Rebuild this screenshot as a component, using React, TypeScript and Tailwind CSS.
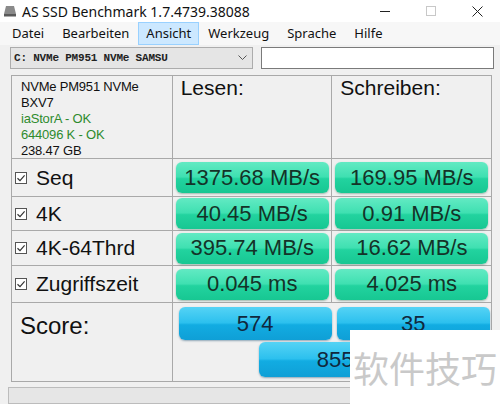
import React from "react";

const rows = [
  { label: "Seq", read: "1375.68 MB/s", write: "169.95 MB/s", h: "h-[38px]" },
  { label: "4K", read: "40.45 MB/s", write: "0.91 MB/s", h: "h-[34px]" },
  { label: "4K-64Thrd", read: "395.74 MB/s", write: "16.62 MB/s", h: "h-[35px]" },
  { label: "Zugriffszeit", read: "0.045 ms", write: "4.025 ms", h: "h-[37px]" },
];

const menu = ["Datei", "Bearbeiten", "Ansicht", "Werkzeug", "Sprache", "Hilfe"];

function CheckBox() {
  return (
    <svg width="12" height="12" viewBox="0 0 12 12" className="shrink-0">
      <rect x="0.5" y="0.5" width="11" height="11" fill="#fff" stroke="#555" />
      <path d="M2.5 6.2 L5 8.6 L9.6 3.4" fill="none" stroke="#333" strokeWidth="1.2" />
    </svg>
  );
}

function GreenBar({ text }: { text: string }) {
  return (
    <div className="flex h-[31px] w-[153px] items-center justify-center rounded-[6px] bg-[linear-gradient(to_bottom,#62eac3_0%,#3fe0b1_48%,#22d39f_54%,#17c792_100%)] text-[22px] leading-none text-[#143328] shadow-[0_1px_2px_rgba(0,80,50,0.35)]">
      {text}
    </div>
  );
}

function BlueBar({ text, className = "" }: { text: string; className?: string }) {
  return (
    <div
      className={`flex h-[33px] w-[153px] items-center justify-center rounded-[6px] bg-[linear-gradient(to_bottom,#55d3f5_0%,#2cc0ee_48%,#12ace2_54%,#0f9fd6_100%)] text-[22px] leading-none text-[#10283d] shadow-[0_1px_2px_rgba(0,60,100,0.4)] ${className}`}
    >
      {text}
    </div>
  );
}

export default function App() {
  return (
    <div className="relative h-[404px] w-[500px] overflow-hidden bg-[#f0f0f0] font-['Noto_Sans',sans-serif] text-[#111]">
      {/* title bar */}
      <div className="flex h-[22px] items-center bg-white">
        <svg width="14" height="12" viewBox="0 0 14 12" className="ml-[3px]">
          <path d="M3 1 L11 1 L13 9 L1 9 Z" fill="#8a8a8a" />
          <rect x="1" y="9" width="12" height="2.5" fill="#5a5a5a" />
        </svg>
        <span className="ml-[5px] text-[14px]">AS SSD Benchmark 1.7.4739.38088</span>
        <div className="ml-auto flex items-center">
          <span className="flex w-[46px] justify-center">
            <span className="block h-[1px] w-[10px] bg-[#222]" />
          </span>
          <span className="flex w-[46px] justify-center">
            <span className="block h-[10px] w-[10px] border border-[#c8c8c8]" />
          </span>
          <span className="flex w-[46px] justify-center">
            <svg width="11" height="11" viewBox="0 0 11 11">
              <path d="M0.5 0.5 L10.5 10.5 M10.5 0.5 L0.5 10.5" stroke="#222" strokeWidth="1" />
            </svg>
          </span>
        </div>
      </div>

      {/* menu */}
      <div className="flex h-[23px] items-stretch bg-[#f7f7f7] pl-[3px] text-[13px]">
        {menu.map((m) =>
          m === "Ansicht" ? (
            <span key={m} className="flex items-center border border-[#99d1ff] bg-[#cce8ff] px-[7px]">
              {m}
            </span>
          ) : (
            <span key={m} className="flex items-center border border-transparent px-[8px]">
              {m}
            </span>
          )
        )}
      </div>

      {/* drive select */}
      <div className="mt-[2px] flex items-center pl-[10px]">
        <div className="flex h-[22px] w-[243px] items-center justify-between border border-[#acacac] bg-[#e5e5e5] pl-[3px] pr-[5px]">
          <span className="font-['Liberation_Mono',monospace] text-[11px] font-bold tracking-[-0.2px] text-[#222]">
            C: NVMe PM951 NVMe SAMSU
          </span>
          <svg width="9" height="6" viewBox="0 0 9 6">
            <path d="M0.5 0.5 L4.5 4.5 L8.5 0.5" fill="none" stroke="#555" />
          </svg>
        </div>
        <div className="ml-[8px] h-[22px] w-[233px] border border-[#7a7a7a] bg-white" />
      </div>

      {/* results grid */}
      <div className="ml-[11px] mt-[6px] w-[481px] border-l border-t border-[#a9a9a9] font-['Liberation_Sans',Arial,sans-serif]">
        <div className="flex h-[83px]">
          <div className="w-[161px] border-b border-r border-[#a9a9a9] pl-[9px] pt-[3px] text-[13px] leading-[16px] tracking-[-0.2px]">
            <div>NVMe PM951 NVMe</div>
            <div>BXV7</div>
            <div className="text-[#2e8b2e]">iaStorA - OK</div>
            <div className="text-[#2e8b2e]">644096 K - OK</div>
            <div>238.47 GB</div>
          </div>
          <div className="w-[160px] border-b border-r border-[#a9a9a9] pl-[8px] pt-[1px] text-[21px] leading-[22px]">Lesen:</div>
          <div className="w-[160px] border-b border-r border-[#a9a9a9] pl-[8px] pt-[1px] text-[21px] leading-[22px]">Schreiben:</div>
        </div>

        {rows.map((r) => (
          <div key={r.label} className={`flex ${r.h}`}>
            <div className="flex w-[161px] items-center gap-[9px] border-b border-r border-[#a9a9a9] pl-[3px] text-[21px]">
              <CheckBox />
              <span>{r.label}</span>
            </div>
            <div className="flex w-[160px] items-center border-b border-r border-[#a9a9a9] pl-[3px]">
              <GreenBar text={r.read} />
            </div>
            <div className="flex w-[160px] items-center border-b border-r border-[#a9a9a9] pl-[3px]">
              <GreenBar text={r.write} />
            </div>
          </div>
        ))}

        <div className="flex h-[79px]">
          <div className="w-[161px] border-b border-r border-[#a9a9a9] pl-[8px] pt-[5px] text-[24px]">Score:</div>
          <div className="flex w-[320px] flex-col border-b border-r border-[#a9a9a9] pl-[6px] pt-[4px]">
            <div className="flex gap-[5px]">
              <BlueBar text="574" />
              <BlueBar text="35" />
            </div>
            <BlueBar text="855" className="ml-[80px] mt-[2px] h-[35px]" />
          </div>
        </div>
      </div>

      {/* progress bar */}
      <div className="ml-[8px] mt-[5px] h-[17px] w-[492px] border border-[#bcbcbc] bg-[#e6e6e6]" />

      {/* watermark */}
      <div className="absolute left-[350px] top-[330px] flex h-[74px] w-[150px] items-center bg-white pl-[3px] font-['Noto_Sans_CJK_SC',sans-serif] text-[36px] text-[#c9c9c9]">
        软件技巧
      </div>
    </div>
  );
}
